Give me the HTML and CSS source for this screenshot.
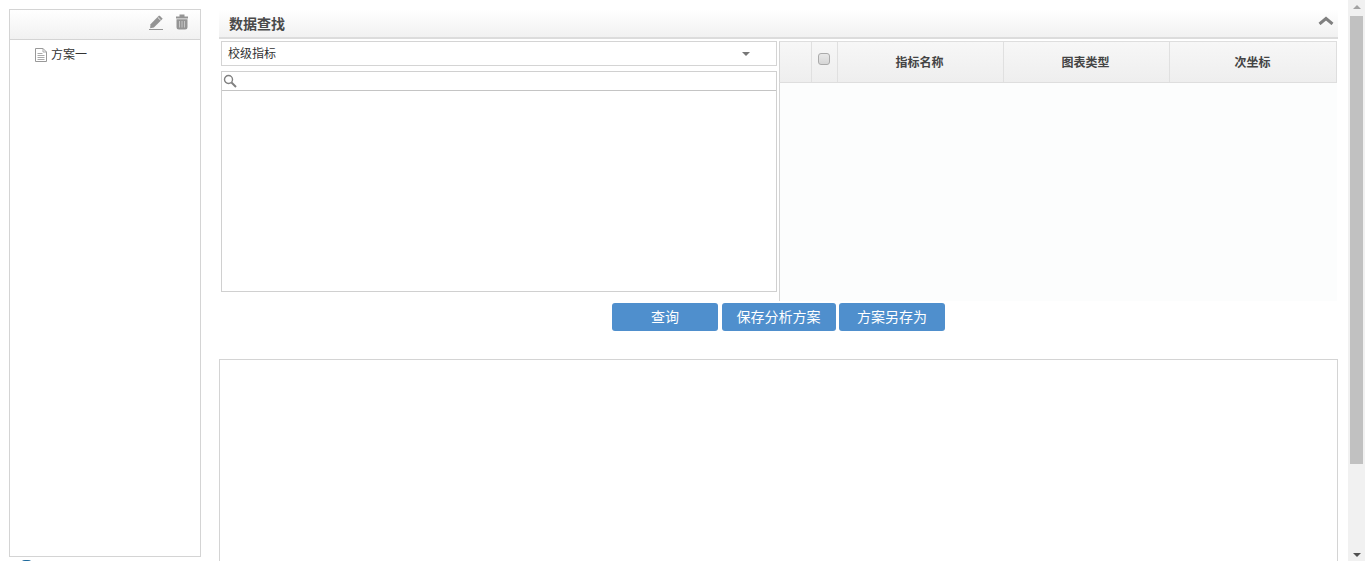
FILE: index.html
```html
<!DOCTYPE html>
<html lang="zh-CN">
<head>
<meta charset="utf-8">
<title>数据查找</title>
<link rel="stylesheet" href="styles.css">
</head>
<body>
<div class="page">
  <aside class="sidebar">
    <div class="side-box">
      <div class="side-head">
        <svg class="tool" width="16" height="16" viewBox="0 0 16 16"><path d="M2.500 10.300 10.800 1.800l1 .0 2.400 2.400 0 1-8.300 8.200-3.800.8z" fill="#949494"/><path d="M9.700 3.300l3 2.900" stroke="#f4f4f4" stroke-width=".9"/><path d="M1 15.500h14" stroke="#949494" stroke-width="1"/></svg>
        <svg class="tool" width="14" height="16" viewBox="0 0 14 16"><path d="M1 2.500h12v2H1zM4.500.5h5v2h-5z" fill="#949494"/><path d="M1.500 5.200h11V13a2.500 2.500 0 0 1-2.500 2.500H4A2.500 2.500 0 0 1 1.500 13z" fill="#949494"/><path d="M4.500 7v6.500M7 7v6.500M9.500 7v6.500" stroke="#c4c4c4" stroke-width="1"/></svg>
      </div>
      <div class="tree-item">
        <svg width="12" height="14" viewBox="0 0 12 14"><path d="M.5.5h7.500l3.500 3.500v9.500H.5z" fill="#fff" stroke="#999"/><path d="M8 .5V4h3.500M2.500 5.500h5M2.500 7.500h7M2.500 9.500h7M2.500 11.500h7" fill="none" stroke="#aaa"/></svg>
        <span>方案一</span>
      </div>
    </div>
    <div class="blue-dot"></div>
  </aside>
  <main class="main">
    <div class="section-head">
      <h2>数据查找</h2>
      <svg width="16" height="9" viewBox="0 0 16 9"><path d="M1.500 8 8 2.500 14.500 8" fill="none" stroke="#808080" stroke-width="3"/></svg>
    </div>
    <div class="finder">
      <div class="left-col">
        <div class="select"><span>校级指标</span><i class="caret"></i></div>
        <div class="list-box">
          <div class="search">
            <svg width="14" height="14" viewBox="0 0 14 14"><circle cx="5.500" cy="5.500" r="4" fill="none" stroke="#808080" stroke-width="1.400"/><path d="M8.500 8.500 13 13" stroke="#808080" stroke-width="2"/></svg>
          </div>
        </div>
      </div>
      <div class="right-col">
        <div class="thead">
          <div class="th c-idx"></div>
          <div class="th c-check"><span class="checkbox"></span></div>
          <div class="th c-col">指标名称</div>
          <div class="th c-col">图表类型</div>
          <div class="th c-col last">次坐标</div>
        </div>
        <div class="tbody"></div>
      </div>
    </div>
    <div class="actions">
      <button class="btn btn-query">查询</button>
      <button class="btn btn-save">保存分析方案</button>
      <button class="btn btn-as">方案另存为</button>
    </div>
    <div class="chart"></div>
  </main>
  <div class="scrollbar">
    <i class="arrow-up"></i>
    <div class="thumb"></div>
    <i class="arrow-down"></i>
  </div>
</div>
</body>
</html>
```

FILE: styles.css
```css
* { box-sizing: border-box; }
html, body { margin: 0; padding: 0; height: 561px; overflow: hidden; background: #fff; }
body { font-family: "Liberation Sans", "Noto Sans CJK SC", sans-serif; font-size: 12px; color: #333; }
.page { display: flex; height: 561px; padding-left: 9px; overflow: hidden; }

.sidebar { position: relative; width: 192px; padding-top: 9px; flex: none; }
.side-box { height: 548px; border: 1px solid #d4d4d4; }
.side-head { height: 30px; border-bottom: 1px solid #d4d4d4; background: linear-gradient(#fff, #f1f1f1); display: flex; justify-content: flex-end; align-items: center; gap: 11px; padding-right: 11px; padding-bottom: 6px; }
.tree-item { display: flex; align-items: center; gap: 4px; padding: 7px 0 0 25px; line-height: 16px; color: #333; }
.blue-dot { position: absolute; left: 12px; top: 560px; width: 11px; height: 6px; border-radius: 4px 4px 0 0; background: #1f6a9c; }

.main { width: 1119px; margin-left: 18px; flex: none; }
.section-head { height: 30px; margin-top: 9px; border-bottom: 2px solid #dcdcdc; background: linear-gradient(#fff, #f1f1f1); display: flex; justify-content: space-between; align-items: center; padding: 0 4px 0 10px; }
.section-head h2 { margin: 0; font-size: 14px; line-height: 30px; font-weight: bold; color: #4a4a4a; position: relative; top: 1px; }
.section-head svg { margin-bottom: 5px; }

.finder { display: flex; gap: 2px; padding: 2px 1px 0 2px; height: 262px; }
.left-col { width: 556px; flex: none; }
.select { height: 25px; border: 1px solid #d4d4d4; display: flex; justify-content: space-between; align-items: center; padding: 0 27px 2px 6px; color: #333; }
.caret { width: 0; height: 0; border: 4px solid transparent; border-top: 4px solid #777; border-bottom: 0; position: relative; left: 1px; top: 1px; }
.list-box { height: 221px; margin-top: 5px; border: 1px solid #d0d0d0; }
.search { height: 19px; border-bottom: 1px solid #c4c4c4; display: flex; align-items: center; padding-left: 1px; }

.right-col { width: 558px; flex: none; display: flex; flex-direction: column; }
.thead { height: 42px; display: flex; border: 1px solid #dedede; border-left-color: #d4d4d4; background: linear-gradient(#f7f7f7, #eeeeee); flex: none; }
.th { display: flex; align-items: center; justify-content: center; border-right: 1px solid #e0e0e0; font-weight: bold; color: #444; }
.c-idx { width: 32px; }
.c-check { width: 26px; padding: 0 2px 6px 0; }
.c-col { width: 166px; padding: 0 2px 2px 0; }
.c-col.last { border-right: 0; padding-right: 1px; }
.checkbox { width: 12px; height: 12px; border: 1px solid #aaa; border-radius: 3px; background: linear-gradient(#e8e8e8, #d6d6d6); }
.tbody { flex: 1; background: #fcfdfd; border-left: 1px solid #d4d4d4; }

.actions { display: flex; padding: 2px 0 0 393px; }
.btn { height: 28px; border: 0; border-radius: 3px; background: #4f8fcd; color: #fff; font: 14px "Liberation Sans", "Noto Sans CJK SC", sans-serif; padding: 0 0 2px; }
.btn-query { width: 106px; }
.btn-save { width: 114px; margin-left: 4px; padding-right: 1px; }
.btn-as { width: 106px; margin-left: 3px; }

.chart { height: 300px; margin-top: 28px; border: 1px solid #d4d4d4; }

.scrollbar { position: relative; width: 17px; height: 561px; margin-left: 10px; background: #f1f1f1; flex: none; }
.thumb { position: absolute; left: 2px; top: 16px; width: 13px; height: 448px; background: #c1c1c1; }
.arrow-up, .arrow-down { position: absolute; left: 5px; width: 0; height: 0; border: 4px solid transparent; }
.arrow-up { top: 5px; border-top: 0; border-bottom: 4px solid #a3a3a3; }
.arrow-down { bottom: 4px; border-bottom: 0; border-top: 4px solid #505050; }
```
